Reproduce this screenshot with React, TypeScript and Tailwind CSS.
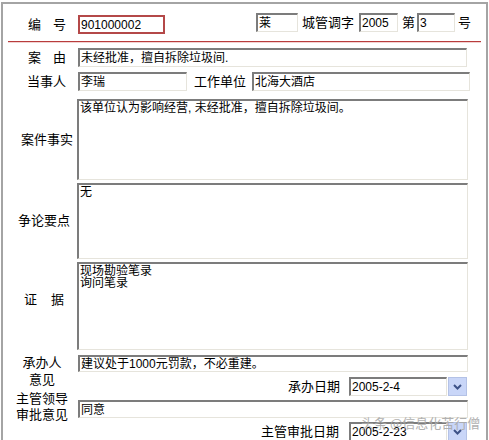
import React from 'react';

const font = { fontFamily: '"Liberation Sans", "Noto Sans CJK SC", sans-serif' };

// sunken win-classic field
const sunk =
  'bg-white border-t-2 border-l-2 border-b border-r border-t-[#7c7c7c] border-l-[#7c7c7c] border-b-[#e6e4dc] border-r-[#e6e4dc]';

function Field({ w, h, children, className = '' }: { w: string; h: string; children?: React.ReactNode; className?: string }) {
  return (
    <div className={`${sunk} ${w} ${h} flex items-center pl-[1px] text-[12px] leading-none whitespace-nowrap overflow-hidden ${className}`}>
      {children}
    </div>
  );
}

function Area({ h, children }: { h: string; children?: React.ReactNode }) {
  return (
    <div className={`${sunk} w-[391px] ${h} px-[1px] pt-[1px] text-[12px] leading-[12px] whitespace-pre-line`}>
      {children}
    </div>
  );
}

function ComboButton() {
  return (
    <div className="w-[19px] h-[19px] ml-[1px] border border-[#b4c2e6] bg-[#c9d6f8] flex items-center justify-center">
      <svg width="9" height="6" viewBox="0 0 9 6">
        <path d="M1 1 L4.5 4.5 L8 1" fill="none" stroke="#3d5288" strokeWidth="2" />
      </svg>
    </div>
  );
}

function DateRow({ label, value, gap }: { label: string; value: string; gap: string }) {
  return (
    <div className="flex items-center justify-end pr-[1px] h-[19px]">
      <span className="text-[13px]">{label}</span>
      <Field w="w-[98px]" h="h-[19px]" className={gap}>
        {value}
      </Field>
      <ComboButton />
    </div>
  );
}

export default function App() {
  return (
    <div className="w-[489px] h-[440px] bg-white overflow-hidden relative text-black" style={font}>
      <div className="ml-px mt-[2px] w-[487px] h-[440px] border-l-2 border-t-2 border-r-2 border-[#a4a4a4]">
        {/* 编号 row */}
        <div className="flex items-start mt-[9px] h-[21px]">
          <div className="w-[75px] pl-[25px] mt-[2px] h-[19px] flex items-center gap-[12px] text-[13px]">
            <span>编</span>
            <span>号</span>
          </div>
          <div className="mt-[2px] w-[87px] h-[19px] border-2 border-[#b44848] bg-white flex items-center pl-[1px] text-[12px]">
            901000002
          </div>
          <div className="flex items-center ml-[91px] text-[13px]">
            <Field w="w-[42px]" h="h-[19px]">莱</Field>
            <span className="ml-[4px]">城管调字</span>
            <Field w="w-[39px]" h="h-[19px]" className="ml-[5px]">2005</Field>
            <span className="ml-[4px]">第</span>
            <Field w="w-[38px]" h="h-[19px]" className="ml-[2px]">3</Field>
            <span className="ml-[3px]">号</span>
          </div>
        </div>

        {/* red rule */}
        <div className="mt-[7px] ml-[5px] w-[473px] border-t border-b border-t-[#b83c3c] border-b-[#f2d2d2]" />

        {/* 案由 */}
        <div className="flex items-center mt-[5px] h-[19px]">
          <div className="w-[75px] pl-[25px] flex gap-[12px] text-[13px]">
            <span>案</span>
            <span>由</span>
          </div>
          <Field w="w-[389px]" h="h-[19px]">未经批准，擅自拆除垃圾间.</Field>
        </div>

        {/* 当事人 */}
        <div className="flex items-center mt-[5px] h-[19px]">
          <div className="w-[75px] pl-[24px] text-[13px]">当事人</div>
          <Field w="w-[109px]" h="h-[19px]">李瑞</Field>
          <span className="ml-[7px] text-[13px]">工作单位</span>
          <Field w="w-[218px]" h="h-[19px]" className="ml-[6px]">北海大酒店</Field>
        </div>

        {/* 案件事实 */}
        <div className="flex items-center mt-[8px]">
          <div className="w-[74px] pl-[18px] text-[13px]">案件事实</div>
          <Area h="h-[81px]">该单位认为影响经营, 未经批准，擅自拆除垃圾间。</Area>
        </div>

        {/* 争论要点 */}
        <div className="flex items-center mt-[3px]">
          <div className="w-[74px] pl-[15px] text-[13px]">争论要点</div>
          <Area h="h-[76px]">无</Area>
        </div>

        {/* 证据 */}
        <div className="flex items-center mt-[3px]">
          <div className="w-[74px] pl-[21px] pb-[12px] flex gap-[14px] text-[13px]">
            <span>证</span>
            <span>据</span>
          </div>
          <Area h="h-[88px]">{'现场勘验笔录\n询问笔录'}</Area>
        </div>

        {/* 承办人意见 / 主管领导审批意见 */}
        <div className="flex items-start mt-[4px]">
          <div className="w-[75px] pl-[3px] text-[13px] text-center">
            <div className="leading-[17px]">承办人</div>
            <div className="leading-[17px]">意见</div>
            <div className="leading-[16px] mt-[3px]">主管领导</div>
            <div className="leading-[16px]">审批意见</div>
          </div>
          <div className="w-[390px] pt-[1px]">
            <Field w="w-[390px]" h="h-[17px]">建议处于1000元罚款，不必重建。</Field>
            <div className="mt-[5px]">
              <DateRow label="承办日期" value="2005-2-4" gap="ml-[9px]" />
            </div>
            <Field w="w-[390px]" h="h-[18px]" className="mt-[4px]">同意</Field>
            <div className="mt-[4px]">
              <DateRow label="主管审批日期" value="2005-2-23" gap="ml-[10px]" />
            </div>
          </div>
        </div>
      </div>

      {/* watermark overlay */}
      <div className="absolute left-[361px] top-[413px] text-[13px] text-[#a9a9a9] opacity-90 whitespace-nowrap" style={{ fontFamily: '"Noto Sans CJK SC", sans-serif' }}>
        头条 @信息化苦行僧
      </div>
    </div>
  );
}
